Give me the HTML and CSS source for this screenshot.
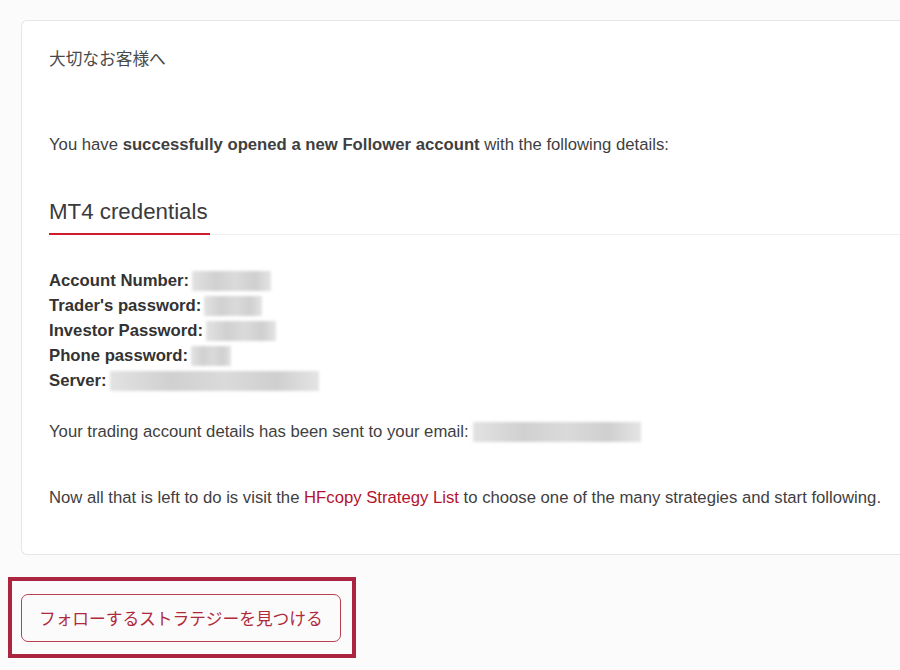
FILE: index.html
```html
<!DOCTYPE html>
<html lang="ja">
<head>
<meta charset="utf-8">
<title>MT4 credentials</title>
<link rel="stylesheet" href="styles.css">
</head>
<body>
<div class="card">
  <p class="greeting">大切なお客様へ</p>
  <p class="intro">You have <strong>successfully opened a new Follower account</strong> with the following details:</p>
  <div class="section-title"><h2>MT4 credentials</h2></div>
  <div class="creds">
    <div class="row"><strong>Account Number:</strong><span class="blur" style="width:79px"></span></div>
    <div class="row"><strong>Trader's password:</strong><span class="blur" style="width:58px"></span></div>
    <div class="row"><strong>Investor Password:</strong><span class="blur" style="width:70px"></span></div>
    <div class="row"><strong>Phone password:</strong><span class="blur" style="width:40px"></span></div>
    <div class="row"><strong>Server:</strong><span class="blur" style="width:209px"></span></div>
  </div>
  <p class="sent">Your trading account details has been sent to your email:<span class="blur email" style="width:168px"></span></p>
  <p class="next">Now all that is left to do is visit the <a href="#">HFcopy Strategy List</a> to choose one of the many strategies and start following.</p>
</div>
<div class="highlight">
  <a class="btn" href="#">フォローするストラテジーを見つける</a>
</div>
</body>
</html>
```

FILE: styles.css
```css
html, body {
  margin: 0;
  padding: 0;
}
body {
  background: #fcfbfb;
  font-family: "Liberation Sans", Arial, "Noto Sans CJK JP", sans-serif;
  font-size: 16.7px;
  color: #3f3f42;
  width: 900px;
  height: 670px;
  overflow: hidden;
}
.card {
  margin: 20px 0 0 21px;
  width: 851px;
  background: #fff;
  border: 1px solid #e6e6e6;
  border-right: none;
  border-radius: 6px 0 0 6px;
  padding: 27px 0 44px 27px;
}
.card p {
  margin: 0;
  line-height: 24px;
}
.greeting {
  color: #4a4a4a;
}
.intro {
  margin-top: 61px !important;
}
.section-title {
  display: flex;
  margin-top: 41px;
  border-bottom: 1px solid #efefef;
}
.section-title h2 {
  margin: 0 0 -1px 0;
  font-size: 22.3px;
  font-weight: normal;
  line-height: 28px;
  padding: 0 2px 7px 0;
  border-bottom: 2px solid #cf1b2b;
  color: #3a3a3d;
}
.creds {
  margin-top: 33px;
}
.row {
  line-height: 25px;
  display: flex;
  align-items: center;
}
.row strong {
  color: #333;
}
.blur {
  display: inline-block;
  height: 20px;
  margin-left: 3px;
  background: linear-gradient(90deg, #e2e2e2 0%, #d0d0d0 30%, #dadada 55%, #cfcfcf 80%, #e4e4e4 100%);
  filter: blur(1.5px);
}
.sent {
  margin-top: 27px !important;
  display: flex;
  align-items: center;
}
.blur.email {
  margin-left: 4px;
}
.next {
  margin-top: 42px !important;
}
.next a {
  color: #b3132e;
  text-decoration: none;
}
.highlight {
  display: inline-block;
  margin: 22px 0 0 8px;
  border: 4px solid #ab2440;
  padding: 13px 11px 12px 9px;
}
.btn {
  display: block;
  height: 46px;
  line-height: 46px;
  padding: 0 17px;
  border: 1px solid #b8404f;
  border-radius: 7px;
  color: #b02a3c;
  text-decoration: none;
  font-family: "Noto Sans CJK JP", sans-serif;
  font-size: 16.7px;
}
```
